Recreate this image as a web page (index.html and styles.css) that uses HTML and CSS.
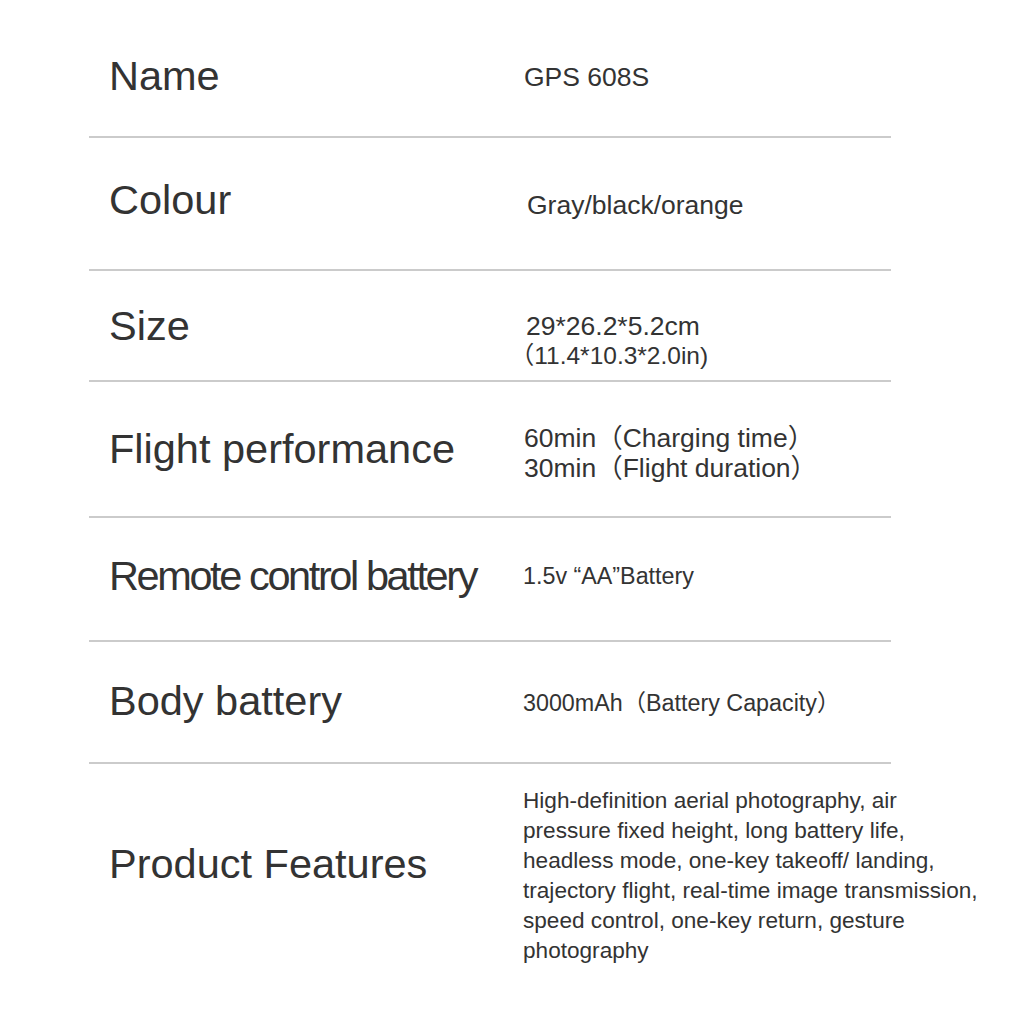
FILE: index.html
```html
<!DOCTYPE html>
<html lang="en">
<head>
<meta charset="utf-8">
<title>GPS 608S specifications</title>
<link rel="stylesheet" href="styles.css">
</head>
<body>
<div class="sheet">
  <div class="row r-name">
    <div class="label">Name</div>
    <div class="value">GPS 608S</div>
  </div>
  <div class="row r-colour">
    <div class="label">Colour</div>
    <div class="value">Gray/black/orange</div>
  </div>
  <div class="row r-size">
    <div class="label">Size</div>
    <div class="value">
      <div class="line">29*26.2*5.2cm</div>
      <div class="line line-paren">（11.4*10.3*2.0in)</div>
    </div>
  </div>
  <div class="row r-flight">
    <div class="label">Flight performance</div>
    <div class="value">
      <div class="line">60min（Charging time）</div>
      <div class="line">30min（Flight duration）</div>
    </div>
  </div>
  <div class="row r-remote">
    <div class="label label-tight">Remote control battery</div>
    <div class="value value-small">1.5v “AA”Battery</div>
  </div>
  <div class="row r-body">
    <div class="label">Body battery</div>
    <div class="value value-small">3000mAh（Battery Capacity）</div>
  </div>
  <div class="row r-features">
    <div class="label">Product Features</div>
    <div class="value value-para">High-definition aerial photography, air<br>pressure fixed height, long battery life,<br>headless mode, one-key takeoff/ landing,<br>trajectory flight, real-time image transmission,<br>speed control, one-key return, gesture<br>photography</div>
  </div>
</div>
</body>
</html>
```
FILE: styles.css
```css
html, body {
  margin: 0;
  padding: 0;
  background: #ffffff;
}

body {
  font-family: "Liberation Sans", "Noto Sans CJK SC", Arial, sans-serif;
  color: #333333;
  width: 1010px;
  height: 1010px;
  overflow: hidden;
}

.sheet {
  position: relative;
  margin-left: 89px;
  width: 802px;
}

.sheet::before {
  content: "";
  position: absolute;
  left: 278px;
  top: 18px;
  width: 576px;
  height: 112px;
  background: #fbfbfb;
  z-index: -1;
}

.row {
  display: grid;
  grid-template-columns: 434px 1fr;
  align-items: start;
  border-bottom: 2px solid #cbcbcb;
  box-sizing: border-box;
}

.label {
  padding-left: 20px;
  font-size: 41.5px;
  line-height: 48px;
  white-space: nowrap;
}

.label-tight {
  letter-spacing: -2.4px;
}

.value {
  font-size: 26.5px;
  line-height: 30px;
  white-space: nowrap;
}

.line {
  text-spacing-trim: trim-start;
}

.line-paren {
  margin-left: -4px;
  font-size: 24.5px;
}

.value-small {
  font-size: 23.3px;
}

.value-para {
  font-size: 22.6px;
  line-height: 30px;
}

.r-name { height: 138px; }
.r-name .label { margin-top: 52px; }
.r-name .value { margin-top: 62px; padding-left: 1px; }

.r-colour { height: 133px; }
.r-colour .label { margin-top: 38px; }
.r-colour .value { margin-top: 52px; padding-left: 4px; }

.r-size { height: 111px; }
.r-size .label { margin-top: 31px; }
.r-size .value { margin-top: 40px; padding-left: 3px; }

.r-flight { height: 136px; }
.r-flight .label { margin-top: 43px; }
.r-flight .value { margin-top: 41px; padding-left: 1px; }

.r-remote { height: 124px; }
.r-remote .label { margin-top: 34px; }
.r-remote .value { margin-top: 43px; }

.r-body { height: 122px; }
.r-body .label { margin-top: 35px; }
.r-body .value { margin-top: 46px; }

.r-features {
  border-bottom: none;
  height: 248px;
}
.r-features .label { margin-top: 76px; }
.r-features .value { margin-top: 22px; }
```
